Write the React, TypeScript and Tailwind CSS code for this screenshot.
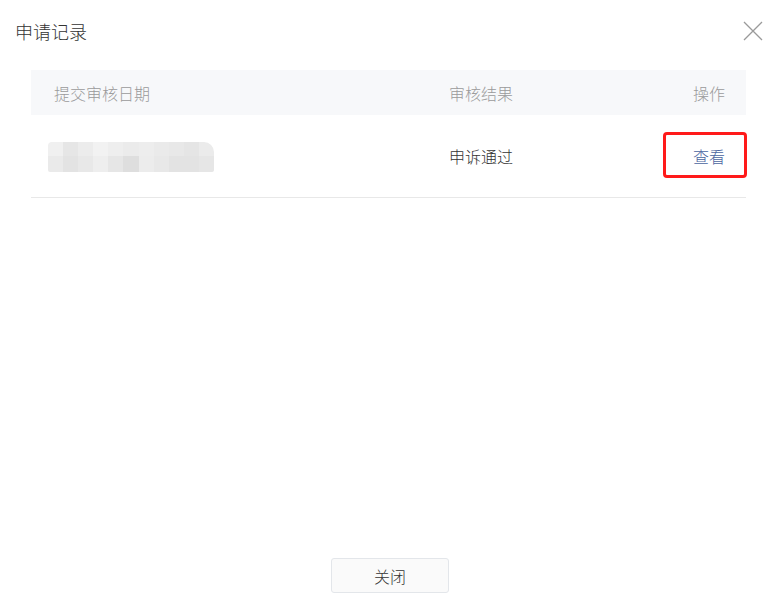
import React from "react";

const top = ["#f0f0f0", "#e6e6e6", "#ececec", "#f2f2f2", "#eeeeee", "#ebebeb", "#ededed", "#eaeaea", "#e8e8e8", "#e5e5e5", "#ebebeb"];
const bottom = ["#eaeaea", "#e3e3e3", "#e8e8e8", "#eeeeee", "#e6e6e6", "#dedede", "#ececec", "#e8e8e8", "#e3e3e3", "#e3e3e3", "#e6e6e6"];

function Mosaic() {
  return (
    <div className="flex flex-col w-[166px] h-[30px] overflow-hidden rounded-tl-[4px] rounded-tr-[10px] rounded-b-[2px]">
      <div className="flex h-[14px]">
        {top.map((c, i) => (
          <div key={i} className="h-full flex-1" style={{ backgroundColor: c }} />
        ))}
      </div>
      <div className="flex h-[16px]">
        {bottom.map((c, i) => (
          <div key={i} className="h-full flex-1" style={{ backgroundColor: c }} />
        ))}
      </div>
    </div>
  );
}

export default function App() {
  return (
    <div
      className="w-[780px] h-[614px] bg-white flex flex-col text-[#333] font-light"
      style={{ fontFamily: '"Noto Sans CJK SC", "Noto Sans", sans-serif' }}
    >
      <div className="flex items-center justify-between pl-[15px] pr-[17px] pt-[20px] h-[42px]">
        <span className="text-[18px] leading-[22px] text-[#333]">申请记录</span>
        <svg width="20" height="20" viewBox="0 0 20 20" className="text-[#9a9a9a]">
          <path d="M1 1 L19 19 M19 1 L1 19" stroke="currentColor" strokeWidth="1.3" fill="none" />
        </svg>
      </div>

      <div className="flex-1 ml-[31px] mr-[34px] mt-[28px]">
        <div className="grid grid-cols-[418px_1fr_120px] h-[45px] items-center bg-[#f7f8fa] text-[16px] text-[#9a9a9a]">
          <span className="pl-[23px]">提交审核日期</span>
          <span>审核结果</span>
          <span className="text-right pr-[21px]">操作</span>
        </div>
        <div className="grid grid-cols-[418px_1fr_120px] h-[83px] items-center border-b border-[#e8e8e8] text-[16px]">
          <div className="pl-[17px] pt-[1px]">
            <Mosaic />
          </div>
          <span className="text-[#333]">申诉通过</span>
          <div className="relative h-full flex items-center justify-end pr-[21px]">
            <span className="text-[#4a64a0] text-[16px]">查看</span>
            <div className="absolute right-[-1px] top-[17px] w-[84px] h-[46px] border-[3px] border-[#ff1a1a] rounded-[4px]" />
          </div>
        </div>
      </div>

      <div className="flex justify-center pb-[21px]">
        <button className="w-[118px] h-[35px] bg-[#fafafa] border border-[#e3e6ea] rounded-[3px] text-[16px] text-[#333]">
          关闭
        </button>
      </div>
    </div>
  );
}
